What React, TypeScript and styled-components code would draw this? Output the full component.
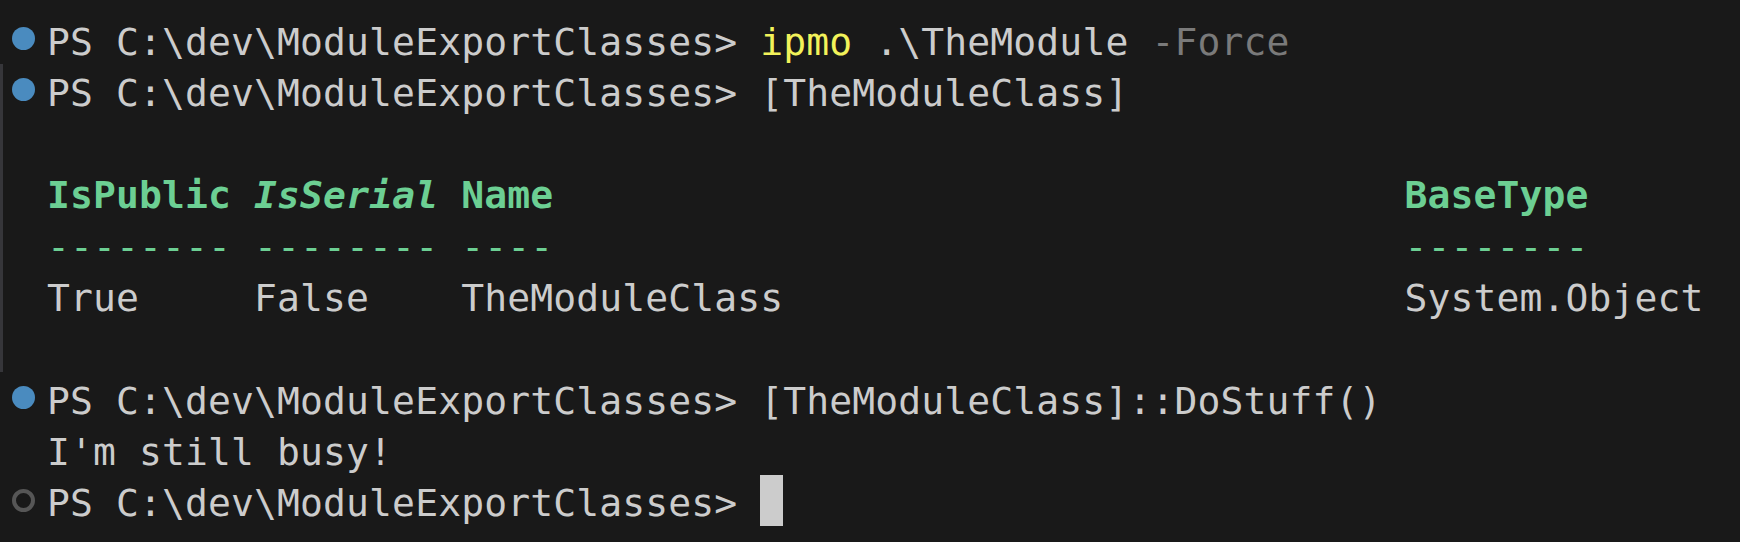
import React from "react";
import styled, { createGlobalStyle } from "styled-components";

const Global = createGlobalStyle`
  html, body { margin: 0; padding: 0; background: #191919; }
  body { overflow: hidden; }
`;

const Terminal = styled.div`
  width: 1740px;
  height: 542px;
  box-sizing: border-box;
  padding-top: 13px;
  background: #191919;
  color: #cccccc;
  font-family: "DejaVu Sans Mono", "Liberation Mono", monospace;
  font-size: 38px;
  letter-spacing: 0.13px;
  line-height: 51.3px;
  display: flex;
  flex-direction: column;
`;

const Block = styled.div<{ $selected?: boolean }>`
  display: flex;
  flex-direction: column;
  border-left: 3px solid ${(p) => (p.$selected ? "#36363a" : "transparent")};
`;

const Line = styled.div`
  display: flex;
  align-items: center;
  height: 51.3px;
`;

const Gutter = styled.div`
  width: 41px;
  flex: none;
  display: flex;
  justify-content: center;
  align-items: center;
  padding-right: 3px;
`;

const Decoration = styled.span<{ $state: "success" | "pending" }>`
  width: 23px;
  height: 23px;
  box-sizing: border-box;
  border-radius: 50%;
  ${(p) =>
    p.$state === "success"
      ? "background: #4a8bbf;"
      : "border: 4px solid #565656;"}
`;

const Text = styled.span`
  white-space: pre;
  padding-top: 7px;
`;

const Yellow = styled.span`
  color: #f2f25a;
`;

const Dim = styled.span`
  color: #7a7a7a;
`;

const Header = styled.span<{ $italic?: boolean }>`
  color: #6ccf93;
  font-weight: bold;
  font-style: ${(p) => (p.$italic ? "italic" : "normal")};
`;

const Rule = styled.span`
  color: #6ccf93;
`;

const Cursor = styled.span`
  flex: none;
  width: 23px;
  height: 51px;
  background: #cccccc;
`;

const PROMPT = "PS C:\\dev\\ModuleExportClasses> ";

export default function App() {
  return (
    <>
      <Global />
      <Terminal>
        <Block>
          <Line>
            <Gutter>
              <Decoration $state="success" />
            </Gutter>
            <Text>
              {PROMPT}
              <Yellow>ipmo</Yellow> .\TheModule <Dim>-Force</Dim>
            </Text>
          </Line>
        </Block>
        <Block $selected>
          <Line>
            <Gutter>
              <Decoration $state="success" />
            </Gutter>
            <Text>{PROMPT}[TheModuleClass]</Text>
          </Line>
          <Line>
            <Gutter />
            <Text> </Text>
          </Line>
          <Line>
            <Gutter />
            <Text>
              <Header>IsPublic</Header> <Header $italic>IsSerial</Header>{" "}
              <Header>Name</Header>
              {" ".repeat(37)}
              <Header>BaseType</Header>
            </Text>
          </Line>
          <Line>
            <Gutter />
            <Text>
              <Rule>{"-------- -------- ----" + " ".repeat(37) + "--------"}</Rule>
            </Text>
          </Line>
          <Line>
            <Gutter />
            <Text>{"True     False    TheModuleClass" + " ".repeat(27) + "System.Object"}</Text>
          </Line>
          <Line>
            <Gutter />
            <Text> </Text>
          </Line>
        </Block>
        <Block>
          <Line>
            <Gutter>
              <Decoration $state="success" />
            </Gutter>
            <Text>{PROMPT}[TheModuleClass]::DoStuff()</Text>
          </Line>
          <Line>
            <Gutter />
            <Text>I'm still busy!</Text>
          </Line>
        </Block>
        <Block>
          <Line>
            <Gutter>
              <Decoration $state="pending" />
            </Gutter>
            <Text>{PROMPT}</Text>
            <Cursor />
          </Line>
        </Block>
      </Terminal>
    </>
  );
}
